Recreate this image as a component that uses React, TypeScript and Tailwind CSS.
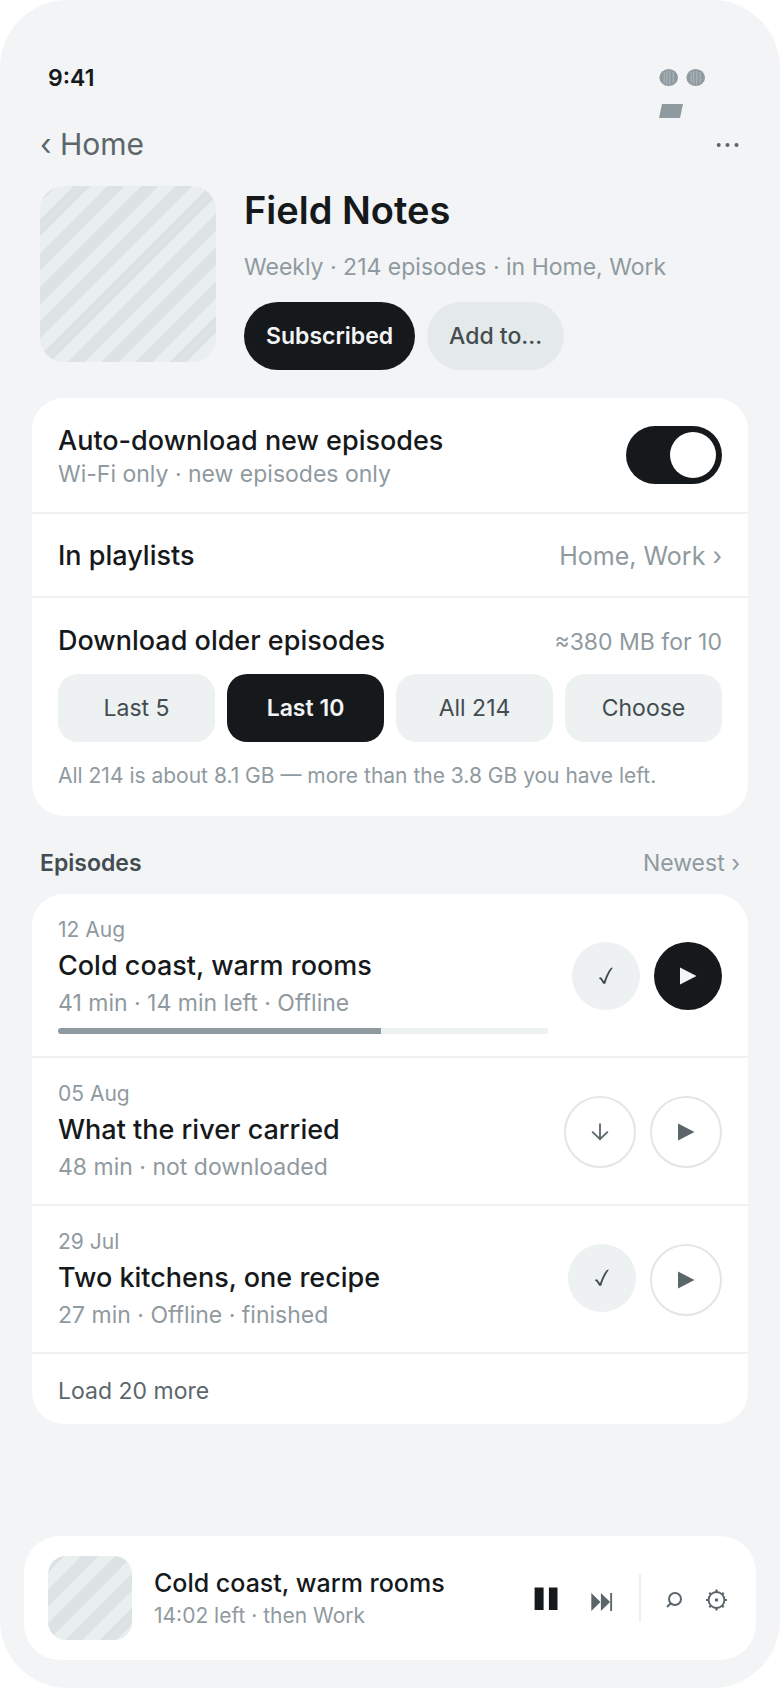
import React, { useState } from 'react'
import clsx from 'clsx'

interface Episode {
    id: number;
    date: string;
    title: string;
    meta: string;
    offline: boolean;
    progress?: number;
}

const EPISODES: Episode[] = [
    { id: 1, date: '12 Aug', title: 'Cold coast, warm rooms', meta: '41 min · 14 min left · Offline', offline: true, progress: 66 },
    { id: 2, date: '05 Aug', title: 'What the river carried', meta: '48 min · not downloaded', offline: false },
    { id: 3, date: '29 Jul', title: 'Two kitchens, one recipe', meta: '27 min · Offline · finished', offline: true },
]

const OLDER_OPTIONS = ['Last 5', 'Last 10', 'All 214', 'Choose']

/* ---------- icons ---------- */

const SignalDot = () => (
    <svg viewBox="0 0 20 20" className="size-5" aria-hidden="true">
        <ellipse cx="9.7" cy="9.5" rx="9.3" ry="8.6" fill="#8f9aa0" />
        <path d="M5.2 4v11M7.8 2.5v14M10.8 2.5v14M14.2 4v11" stroke="#b3bcc0" strokeWidth="0.9" />
    </svg>
)

const Battery = () => (
    <svg viewBox="0 0 24 14" className="h-3.5 w-6" aria-hidden="true">
        <path d="M3 0h21l-3 14H0z" fill="#8f9aa0" />
    </svg>
)

const MoreIcon = () => (
    <svg viewBox="0 0 24 8" className="h-2 w-6" fill="currentColor" aria-hidden="true">
        <circle cx="2.7" cy="5" r="2" />
        <circle cx="11.5" cy="5" r="2" />
        <circle cx="20.5" cy="5" r="2" />
    </svg>
)

const PlayIcon = () => (
    <svg viewBox="0 0 18 18" className="size-[18px]" fill="currentColor" aria-hidden="true">
        <path d="M1 0.4v17.2L17.5 9z" />
    </svg>
)

const CheckIcon = () => (
    <svg viewBox="0 0 18 18" className="size-[18px]" aria-hidden="true">
        <path d="M2.2 10.9c0.8-0.9 1.8-0.9 2.500 0L7 14.200C9 8.500 11 4.200 13.800 1l2.200-0.400C12.600 5 10 10.500 8.300 16.800H6.200L3.900 12.900C3.400 12.200 3 12 2.200 12z" fill="currentColor" />
    </svg>
)

const DownIcon = () => (
    <svg viewBox="0 0 18 18" className="size-[18px]" fill="none" stroke="currentColor" strokeWidth="1.8" aria-hidden="true">
        <path d="M9 0.500v15.500M1.200 8.600L9 16.200l7.800-7.600" />
    </svg>
)

const PauseIcon = () => (
    <svg viewBox="0 0 24 24" className="size-6" fill="currentColor" aria-hidden="true">
        <path d="M0.600 1.600h9v22.400h-9zM14.900 1.600h8.600v22.400h-8.600z" />
    </svg>
)

const SkipIcon = () => (
    <svg viewBox="0 0 22 26" className="h-[26px] w-[22px]" fill="currentColor" aria-hidden="true">
        <path d="M0.300 8v18l9.200-9zM9.900 8v18l9.200-9zM19.200 8h1.900v18h-1.900z" />
    </svg>
)

const SearchIcon = () => (
    <svg viewBox="0 0 18 20" className="h-5 w-[18px]" fill="none" stroke="currentColor" strokeWidth="2" aria-hidden="true">
        <circle cx="10" cy="11" r="6" />
        <path d="M5.800 15.200L2 19" />
    </svg>
)

const GearIcon = () => (
    <svg viewBox="0 0 22 26" className="h-[26px] w-[22px]" fill="none" stroke="currentColor" aria-hidden="true">
        <circle cx="11.500" cy="15" r="7.900" strokeWidth="2" />
        <circle cx="11.500" cy="15" r="1.700" fill="currentColor" stroke="none" />
        <path d="M11.500 4.500v3M11.500 22.500v3M1 15h3M19 15h3M4.300 7.800l1.900 1.900M16.800 20.300l1.900 1.900M18.700 7.800l-1.900 1.900M6.200 20.300l-1.900 1.900" strokeWidth="2.200" />
    </svg>
)

const Artwork = ({ className }: Readonly<{ className: string }>) => (
    <div className={clsx('shrink-0 bg-[repeating-linear-gradient(135deg,#dde2e4_0_12px,#e9eeee_12px_24px)]', className)} />
)

/* ---------- blocks ---------- */

const EpisodeRow = ({ episode, current }: Readonly<{ episode: Episode; current: boolean }>) => (
    <li className="flex items-center gap-6 border-b-2 border-[#edf1f2] px-[26px] pt-6 pb-[22px]">
        <div className="min-w-0 flex-1">
            <div className="text-[21px] leading-6 text-[#8f9aa0]">{episode.date}</div>
            <div className="mt-1.5 text-[27px] leading-9 font-medium text-[#15191b]">{episode.title}</div>
            <div className="mt-1 text-[23px] leading-[30px] text-[#8f9aa0]">{episode.meta}</div>
            {episode.progress !== undefined && (
                <div
                    className="mt-2.5 h-1.5 overflow-hidden rounded-full bg-[#edf1f2]"
                    role="progressbar"
                    aria-label={episode.title}
                    aria-valuenow={episode.progress}
                >
                    <div className="h-full bg-[#8f9aa0]" style={{ width: `${episode.progress}%` }} />
                </div>
            )}
        </div>
        <div className="flex shrink-0 items-start gap-3.5">
            {episode.offline ? (
                <button type="button" aria-label="Downloaded" className="flex size-[68px] items-center justify-center rounded-full bg-[#edf1f2] text-[#434c50]">
                    <CheckIcon />
                </button>
            ) : (
                <button type="button" aria-label="Download" className="flex size-[72px] items-center justify-center rounded-full border-2 border-[#e2e6e9] text-[#5b666b]">
                    <DownIcon />
                </button>
            )}
            <button
                type="button"
                aria-label={`Play ${episode.title}`}
                className={clsx(
                    'flex items-center justify-center rounded-full',
                    current ? 'size-[68px] bg-[#15191b] text-[#f2f4f6]' : 'size-[72px] border-2 border-[#e2e6e9] text-[#5b666b]'
                )}
            >
                <PlayIcon />
            </button>
        </div>
    </li>
)

const Player = () => (
    <footer className="mx-6 mt-auto mb-7 flex items-center rounded-[36px] bg-white px-6 py-5">
        <Artwork className="size-[84px] rounded-[18px]" />
        <div className="ml-[22px] min-w-0 flex-1 pt-0.5">
            <div className="text-[25px] leading-[34px] font-medium text-[#15191b]">Cold coast, warm rooms</div>
            <div className="text-[21px] leading-8 text-[#8f9aa0]">14:02 left · then Work</div>
        </div>
        <div className="flex items-center gap-3">
            <button type="button" aria-label="Pause" className="flex h-12 w-12 items-center justify-center text-[#15191b]">
                <PauseIcon />
            </button>
            <button type="button" aria-label="Next" className="flex h-12 w-10 items-center justify-center text-[#5b666b]">
                <SkipIcon />
            </button>
        </div>
        <div className="mx-[17px] h-12 w-0.5 bg-[#edf1f2]" />
        <div className="flex items-center gap-2.5 text-[#5b666b]">
            <button type="button" aria-label="Search" className="flex h-12 w-8 items-center justify-center">
                <SearchIcon />
            </button>
            <button type="button" aria-label="Settings" className="flex h-12 w-8 items-center justify-center">
                <GearIcon />
            </button>
        </div>
    </footer>
)

export default function App() {
    const [autoDownload, setAutoDownload] = useState(true)
    const [older, setOlder] = useState('Last 10')

    return (
        <div className="flex min-h-screen flex-col rounded-[68px] bg-[#f2f4f6] font-[Inter,'Liberation_Sans',sans-serif]">
            <div className="flex items-start justify-between px-12 pt-[62px]">
                <div className="text-[23px] leading-8 font-semibold text-[#15191b]">9:41</div>
                <div className="mt-1.5 flex w-[73px] flex-wrap gap-x-[7px] gap-y-4">
                    <SignalDot />
                    <SignalDot />
                    <Battery />
                </div>
            </div>

            <nav className="mt-1.5 flex items-center justify-between px-10 text-[#5b666b]">
                <a href="#home" className="text-3xl leading-10">‹ Home</a>
                <button type="button" aria-label="More"><MoreIcon /></button>
            </nav>

            <header className="mt-[22px] flex gap-7 px-10">
                <Artwork className="size-44 rounded-3xl" />
                <div className="min-w-0">
                    <h1 className="text-[38px] leading-[48px] font-semibold text-[#15191b]">Field Notes</h1>
                    <p className="mt-[18px] text-[23px] leading-[30px] text-[#8f9aa0]">Weekly · 214 episodes · in Home, Work</p>
                    <div className="mt-5 flex gap-3 text-[23px] leading-7">
                        <button type="button" className="rounded-full bg-[#15191b] px-[22px] py-5 font-semibold text-[#f2f4f6]">Subscribed</button>
                        <button type="button" className="rounded-full bg-[#e4eaea] px-[22px] py-5 font-medium text-[#434c50]">Add to…</button>
                    </div>
                </div>
            </header>

            <section className="mx-8 mt-7 rounded-[32px] bg-white">
                <div className="flex items-center justify-between border-b-2 border-[#edf1f2] px-[26px] py-6">
                    <label htmlFor="auto-download">
                        <span className="block text-[27px] leading-[38px] font-medium text-[#15191b]">Auto-download new episodes</span>
                        <span className="block text-[23px] leading-7 text-[#8f9aa0]">Wi-Fi only · new episodes only</span>
                    </label>
                    <input
                        id="auto-download"
                        type="checkbox"
                        role="switch"
                        checked={autoDownload}
                        onChange={(e) => setAutoDownload(e.target.checked)}
                        className="flex h-[58px] w-24 shrink-0 appearance-none items-center rounded-full bg-[#c9d0d3] px-1.5 before:size-[46px] before:rounded-full before:bg-white checked:justify-end checked:bg-[#15191b]"
                    />
                </div>
                <div className="flex items-center justify-between border-b-2 border-[#edf1f2] px-[26px] pt-[25px] pb-[23px] leading-[34px]">
                    <span className="text-[27px] font-medium text-[#15191b]">In playlists</span>
                    <a href="#playlists" className="text-[25px] text-[#8f9aa0]">Home, Work ›</a>
                </div>
                <div className="px-[26px] pt-[26px] pb-[26px]">
                    <div className="flex h-[34px] items-baseline justify-between leading-[34px]">
                        <span className="text-[27px] font-medium text-[#15191b]">Download older episodes</span>
                        <span className="text-[23px] text-[#8f9aa0]">≈380 MB for 10</span>
                    </div>
                    <div className="mt-4 grid grid-cols-4 gap-3">
                        {OLDER_OPTIONS.map((option) => (
                            <button
                                key={option}
                                type="button"
                                aria-pressed={older === option}
                                onClick={() => setOlder(option)}
                                className={clsx(
                                    'rounded-[20px] py-5 text-[23px] leading-7',
                                    older === option ? 'bg-[#15191b] font-semibold text-[#f2f4f6]' : 'bg-[#edf1f2] text-[#434c50]'
                                )}
                            >
                                {option}
                            </button>
                        ))}
                    </div>
                    <p className="mt-5 text-[21px] leading-7 text-[#8f9aa0]">All 214 is about 8.1 GB — more than the 3.8 GB you have left.</p>
                </div>
            </section>

            <div className="mt-8 mb-4 flex items-center justify-between px-10 text-[23px] leading-[30px]">
                <h2 className="font-semibold text-[#434c50]">Episodes</h2>
                <button type="button" className="text-[#8f9aa0]">Newest ›</button>
            </div>

            <section className="mx-8 mb-10 rounded-[32px] bg-white">
                <ul>
                    {EPISODES.map((episode) => (
                        <EpisodeRow key={episode.id} episode={episode} current={episode.id === 1} />
                    ))}
                </ul>
                <button type="button" className="block w-full px-[26px] pt-[22px] pb-[18px] text-left text-[23px] leading-[30px] text-[#5b666b]">Load 20 more</button>
            </section>

            <Player />
        </div>
    )
}
